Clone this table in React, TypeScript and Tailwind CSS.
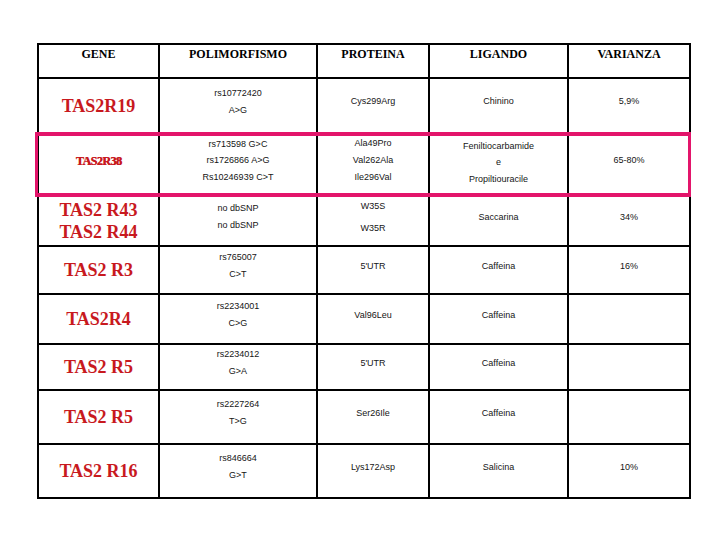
import React from "react";

type Row = {
  gene: string[];
  geneCls: string;
  poly: string[];
  polyLead: string;
  prot: string[];
  protLead: string;
  lig: string[];
  ligCls: string;
  var: string;
};

const rows: Row[] = [
  { gene: ["TAS2R19"], geneCls: "text-[18px] leading-[20px]", poly: ["rs10772420", "A>G"], polyLead: "leading-[17px]", prot: ["Cys299Arg"], protLead: "leading-[17px]", lig: ["Chinino"], ligCls: "pb-[8px]", var: "5,9%" },
  {
    gene: ["TAS2R38"],
    geneCls: "text-[12px] leading-[20px] tracking-[-0.5px] pb-[8px] [text-shadow:0.6px_0_0_#c8191e]",
    poly: ["rs713598 G>C", "rs1726866 A>G", "Rs10246939 C>T"],
    polyLead: "leading-[16.5px]",
    prot: ["Ala49Pro", "Val262Ala", "Ile296Val"],
    protLead: "leading-[17px]",
    lig: ["Feniltiocarbamide", "e", "Propiltiouracile"],
    ligCls: "pb-[4px]",
    var: "65-80%",
  },
  { gene: ["TAS2 R43", "TAS2 R44"], geneCls: "text-[18px] leading-[22px]", poly: ["no dbSNP", "no dbSNP"], polyLead: "leading-[17px]", prot: ["W35S", "W35R"], protLead: "leading-[22px]", lig: ["Saccarina"], ligCls: "pb-[8px]", var: "34%" },
  { gene: ["TAS2 R3"], geneCls: "text-[18px] leading-[20px]", poly: ["rs765007", "C>T"], polyLead: "leading-[17px]", prot: ["5'UTR"], protLead: "leading-[17px]", lig: ["Caffeina"], ligCls: "pb-[8px]", var: "16%" },
  { gene: ["TAS2R4"], geneCls: "text-[18px] leading-[20px]", poly: ["rs2234001", "C>G"], polyLead: "leading-[17px]", prot: ["Val96Leu"], protLead: "leading-[17px]", lig: ["Caffeina"], ligCls: "pb-[8px]", var: "" },
  { gene: ["TAS2 R5"], geneCls: "text-[18px] leading-[20px]", poly: ["rs2234012", "G>A"], polyLead: "leading-[17px]", prot: ["5'UTR"], protLead: "leading-[17px]", lig: ["Caffeina"], ligCls: "pb-[8px]", var: "" },
  { gene: ["TAS2 R5"], geneCls: "text-[18px] leading-[20px]", poly: ["rs2227264", "T>G"], polyLead: "leading-[17px]", prot: ["Ser26Ile"], protLead: "leading-[17px]", lig: ["Caffeina"], ligCls: "pb-[8px]", var: "" },
  { gene: ["TAS2 R16"], geneCls: "text-[18px] leading-[20px]", poly: ["rs846664", "G>T"], polyLead: "leading-[17px]", prot: ["Lys172Asp"], protLead: "leading-[17px]", lig: ["Salicina"], ligCls: "pb-[8px]", var: "10%" },
];

const small =
  "bg-white flex flex-col items-center justify-center text-[9px] text-[#151515] whitespace-nowrap font-['Liberation_Sans',Arial,sans-serif]";

function Small({ lines, lead, extra = "pb-[8px]" }: { lines: string[]; lead: string; extra?: string }) {
  return (
    <div className={`${small} ${extra}`}>
      {lines.map((l, i) => (
        <div key={i} className={lead}>
          {l}
        </div>
      ))}
    </div>
  );
}

export default function App() {
  const headers = ["GENE", "POLIMORFISMO", "PROTEINA", "LIGANDO", "VARIANZA"];
  return (
    <div className="w-[720px] h-[540px] bg-white pt-[43px] pl-[37px]">
      <div className="relative w-[654px]">
        <div className="grid bg-black p-[2px] gap-[2px] grid-cols-[119px_156px_110px_137px_120px] grid-rows-[32px_53px_61px_48px_46px_48px_44px_52px_52px]">
          {headers.map((h) => (
            <div
              key={h}
              className="bg-white flex justify-center pt-[2px] text-[12px] font-bold text-black leading-[14px] font-['Liberation_Serif','Times_New_Roman',serif]"
            >
              {h}
            </div>
          ))}
          {rows.map((r, ri) => (
            <React.Fragment key={ri}>
              <div
                className={`bg-white flex flex-col items-center justify-center font-bold text-[#c8191e] whitespace-nowrap font-['Liberation_Serif','Times_New_Roman',serif] ${r.geneCls}`}
              >
                {r.gene.map((g, i) => (
                  <div key={i}>{g}</div>
                ))}
              </div>
              <Small lines={r.poly} lead={r.polyLead} />
              <Small lines={r.prot} lead={r.protLead} />
              <Small lines={r.lig} lead="leading-[16.5px]" extra={r.ligCls} />
              <Small lines={[r.var]} lead="leading-[17px]" />
            </React.Fragment>
          ))}
        </div>
        <div className="absolute left-[-2px] top-[89px] w-[656px] h-[65px] border-y-[4px] border-x-[3px] border-[#e3156b] pointer-events-none" />
      </div>
    </div>
  );
}
